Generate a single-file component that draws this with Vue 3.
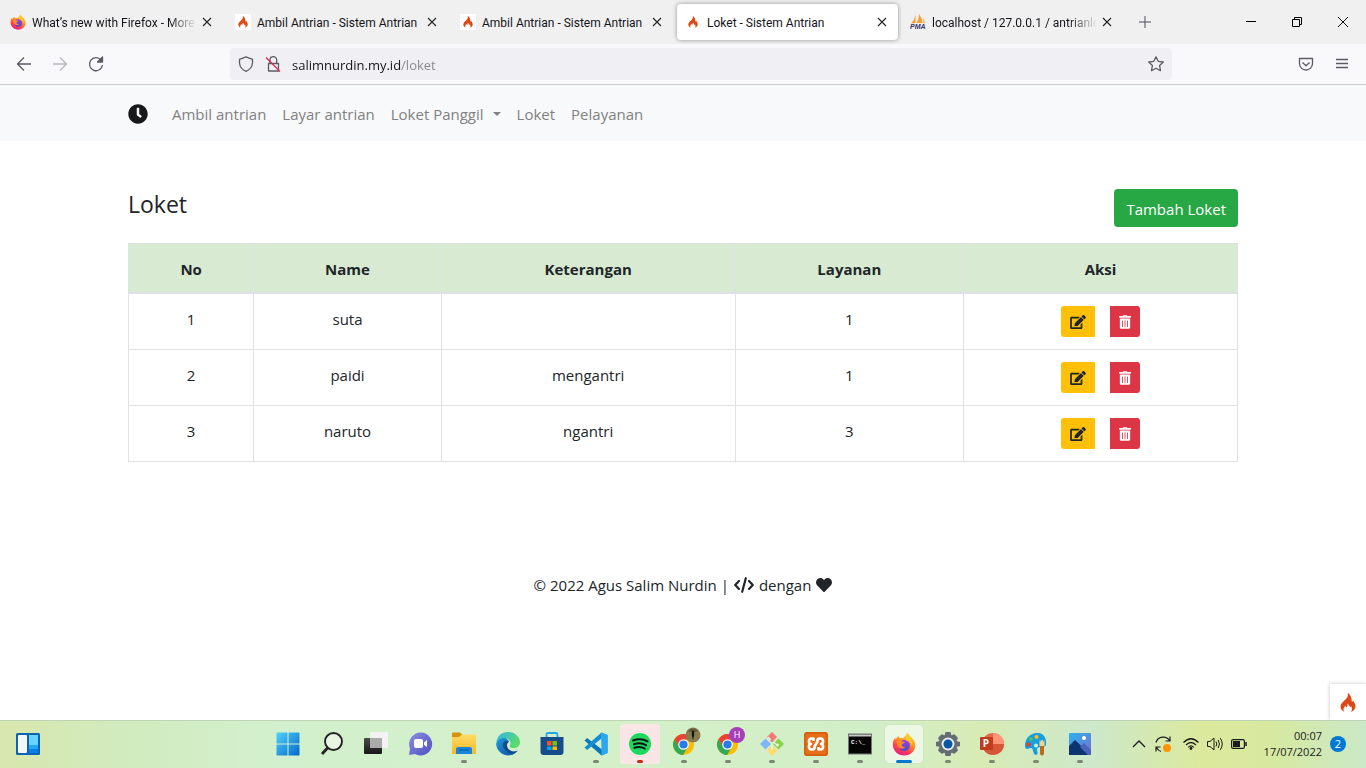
<script setup>
import { ref } from 'vue'

const tabs = [
  { title: 'What’s new with Firefox - More', icon: 'firefox', fade: true },
  { title: 'Ambil Antrian - Sistem Antrian', icon: 'flame', tile: true },
  { title: 'Ambil Antrian - Sistem Antrian', icon: 'flame', tile: true },
  { title: 'Loket - Sistem Antrian', icon: 'flame', active: true },
  { title: 'localhost / 127.0.0.1 / antrianlok', icon: 'pma', fade: true }
]
const address = ref('salimnurdin.my.id/loket')
const rows = [
  { no: 1, name: 'suta', note: '', service: 1 },
  { no: 2, name: 'paidi', note: 'mengantri', service: 1 },
  { no: 3, name: 'naruto', note: 'ngantri', service: 3 }
]
const apps = [
  { id: 'start' }, { id: 'search' }, { id: 'taskview' }, { id: 'chat' },
  { id: 'explorer', open: true }, { id: 'edge' }, { id: 'store' },
  { id: 'vscode', open: true }, { id: 'spotify', alert: true },
  { id: 'chrome', open: true }, { id: 'chrome-h', open: true },
  { id: 'git', open: true }, { id: 'xampp', open: true },
  { id: 'terminal', open: true }, { id: 'firefox', active: true },
  { id: 'settings', open: true }, { id: 'powerpoint', open: true },
  { id: 'paint', open: true }, { id: 'photos', open: true }
]
</script>

<template>
  <div class="desktop">
    <svg class="defs" aria-hidden="true">
      <defs>
        <linearGradient id="ffBody" x1="0.8" y1="0" x2="0.3" y2="1">
          <stop offset="0" stop-color="#ffe03a" /><stop offset="0.4" stop-color="#ff9a22" />
          <stop offset="0.7" stop-color="#ff4645" /><stop offset="1" stop-color="#e8188b" />
        </linearGradient>
        <linearGradient id="ffCore" x1="0" y1="0" x2="0" y2="1">
          <stop offset="0" stop-color="#9a3ff0" /><stop offset="1" stop-color="#4a49c8" />
        </linearGradient>
        <linearGradient id="winBlue" x1="0" y1="0" x2="1" y2="1">
          <stop offset="0" stop-color="#4fd0fb" /><stop offset="1" stop-color="#0669c9" />
        </linearGradient>
        <linearGradient id="edgeTop" x1="0" y1="0" x2="1" y2="0.5">
          <stop offset="0" stop-color="#2cb3e8" /><stop offset="1" stop-color="#5fdb6b" />
        </linearGradient>
        <linearGradient id="edgeLow" x1="0" y1="0" x2="1" y2="1">
          <stop offset="0" stop-color="#1c9de0" /><stop offset="1" stop-color="#0d4a9b" />
        </linearGradient>
        <linearGradient id="folder" x1="0" y1="0" x2="0" y2="1">
          <stop offset="0" stop-color="#ffdb65" /><stop offset="1" stop-color="#f8b826" />
        </linearGradient>
        <linearGradient id="chatFill" x1="0" y1="0" x2="1" y2="1">
          <stop offset="0" stop-color="#8a8fe4" /><stop offset="1" stop-color="#4f4ebd" />
        </linearGradient>
        <linearGradient id="photoSky" x1="0" y1="0" x2="1" y2="1">
          <stop offset="0" stop-color="#2ab3ef" /><stop offset="1" stop-color="#7a6fd0" />
        </linearGradient>
        <linearGradient id="viewDark" x1="0" y1="0" x2="0" y2="1">
          <stop offset="0" stop-color="#4b4b4b" /><stop offset="1" stop-color="#161616" />
        </linearGradient>
      </defs>
      <symbol id="flame" viewBox="0 0 16 19">
        <path fill="#dd4814" d="M7.600 0C8.300 2 7.800 3.900 6 6C4.200 8 .6 10.300.5 13.600C.4 16 2.100 18 4.600 19C3.300 17.700 3.100 15.900 4.100 14.500C4.500 13.900 5 13.500 5.100 12.700C6 13.200 6.300 13.900 6.100 14.800C7.300 13.900 7.700 12.400 7.300 10.800C9.400 11.600 9.300 13.300 10.100 14.300C10.700 14.100 10.900 13.600 10.900 13C12.300 14.900 12.300 17.400 10.800 19C13.700 18.100 15.600 15.900 15.500 13.100C15.400 10.300 13.700 9.300 13.200 7.200C12.700 7.700 12.500 8.200 12.600 9C11.300 8.200 11.800 6.600 11.300 4.700C10.800 2.600 9.600 1 7.600 0Z" />
      </symbol>
      <symbol id="firefox" viewBox="0 0 24 24">
        <path fill="url(#ffBody)" d="M15 .5C17.500 2.500 18 4 19 5.300C22 7.500 23.500 10.500 23.300 14C22.800 19.500 18.200 23.500 12.300 23.500C6 23.500 1 19 .8 12.800C.7 9.500 2 7 3.200 5.500C3.200 6.500 3.300 7 3.800 7.500C4.500 6 5.500 4.700 7 4C6.900 5 7.200 5.700 7.700 6.200C8.600 5.800 10 5.900 11 6.300C13 4.600 14.600 3 15 .5Z" />
        <circle cx="12.300" cy="13.500" r="5.600" fill="url(#ffCore)" />
        <path fill="#ff8a25" d="M4 9.500C6.500 8 8 8.500 9.500 9.300C10.500 10 12 9.700 13 10.300C12.500 11.700 10 11.500 9.700 12.700C9.600 14.500 11.500 15.500 13.800 14.600C12.500 17 8.500 17.500 6.500 15C5 13.300 5 11 4 9.500Z" />
        <path fill="#ffc928" d="M15.300 2C17 6 20.500 8 20 13.500C19.500 12 18.500 10.500 16.500 9.500C14 8.500 13 7 13.700 5Z" />
      </symbol>
      <symbol id="chrome" viewBox="0 0 24 24">
        <circle cx="12" cy="12" r="11" fill="#fbbc05" />
        <path fill="#ea4335" d="M2.500 6.500A11 11 0 0 1 21.500 6.500L12 7L7.500 14.500Z" />
        <path fill="#34a853" d="M2.500 6.500A11 11 0 0 0 11.500 23L16.500 14.500L7.700 14.500Z" />
        <circle cx="12" cy="12" r="5.500" fill="#fff" /><circle cx="12" cy="12" r="4.300" fill="#287bea" />
      </symbol>
      <symbol id="close" viewBox="0 0 10 10">
        <path d="M1 1L9 9M9 1L1 9" fill="none" stroke="#222" stroke-width="1.100" />
      </symbol>
    </svg>

    <header class="browser">
      <div class="tabstrip">
        <div v-for="(tab, i) in tabs" :key="i" class="tab" :class="{ active: tab.active }">
          <svg v-if="tab.icon === 'firefox'" class="favicon"><use href="#firefox" /></svg>
          <svg v-else-if="tab.icon === 'pma'" class="favicon" viewBox="0 0 16 16">
            <path d="M5.500 1V9L1 9.500Q4.500 6 5.500 1M9 0Q12.500 5 12.500 9L6.500 9Q9 5 9 0Z" fill="#f7a030" />
            <path d="M12.500 3.500Q15 6.500 15 9.500L13 9Z" fill="#f8be70" />
            <text x="0" y="15" font-family="Liberation Sans, sans-serif" font-size="7" font-weight="700" font-style="italic" fill="#34366b">PMA</text>
          </svg>
          <span v-else class="favicon flame-icon" :class="{ tile: tab.tile }"><svg><use href="#flame" /></svg></span>
          <span class="tab-title" :class="{ fade: tab.fade }">{{ tab.title }}</span>
          <button class="tab-close" aria-label="Close tab"><svg><use href="#close" /></svg></button>
        </div>
        <button class="new-tab" aria-label="New tab">
          <svg viewBox="0 0 12 12"><path d="M6 0V12M0 6H12" stroke="#4c4b57" fill="none" /></svg>
        </button>
        <div class="window-controls">
          <button aria-label="Minimize"><svg viewBox="0 0 10 10"><path d="M0 4.500H10" stroke="#000" /></svg></button>
          <button aria-label="Restore"><svg viewBox="0 0 10 10" fill="none" stroke="#000"><path d="M.5 2.500H7.500V9.500H.5ZM2.500 2.500V.5H9.500V7.500H7.500" /></svg></button>
          <button aria-label="Close window"><svg viewBox="0 0 10 10"><path d="M0 0L10 10M10 0L0 10" stroke="#111" /></svg></button>
        </div>
      </div>
      <div class="toolbar">
        <div class="tools">
          <button aria-label="Back"><svg viewBox="0 0 16 16"><path d="M15 8H1.500M8 1.500L1.500 8L8 14.500" /></svg></button>
          <button aria-label="Forward" class="dim"><svg viewBox="0 0 16 16"><path d="M1 8H14.500M8 1.500L14.500 8L8 14.500" /></svg></button>
          <button aria-label="Reload"><svg viewBox="0 0 16 16"><path d="M13 4A6.500 6.500 0 1 0 14.500 9" /><path d="M14.500 1V6H9.500Z" class="solid" /></svg></button>
        </div>
        <div class="urlbar">
          <svg class="url-icon" viewBox="0 0 16 16"><path d="M8 .8L14.500 3.300V7Q14 12.800 8 15.300Q2 12.800 1.500 7V3.300Z" /></svg>
          <svg class="url-icon" viewBox="0 0 16 16">
            <path d="M3.500 7.500H13.500V15H3.500ZM5 7V4A3.300 3.300 0 0 1 11.700 4V7" />
            <path d="M1 1.500L15 15.500" class="slash" />
          </svg>
          <input v-model="address" class="address" aria-label="Address" type="text" />
          <button class="star" aria-label="Bookmark">
            <svg viewBox="0 0 16 16"><path d="M8 .9L10.200 5.300L15.300 6L11.600 9.500L12.500 14.700L8 12.300L3.500 14.700L4.400 9.500L.7 6L5.800 5.300Z" /></svg>
          </button>
        </div>
        <div class="tools tools-right">
          <button aria-label="Pocket"><svg viewBox="0 0 16 16"><path d="M1.500 2.500H14.500V7.500A6.500 6.500 0 0 1 1.500 7.500ZM4.500 6.500L8 9.800L11.500 6.500" /></svg></button>
          <button aria-label="Menu"><svg viewBox="0 0 16 16"><path d="M2 3.500H14M2 7.500H14M2 11.500H14" /></svg></button>
        </div>
      </div>
    </header>

    <main class="page">
      <nav class="navbar">
        <div class="container nav-row">
          <a href="#" class="brand" aria-label="Home">
            <svg viewBox="0 0 512 512"><path d="M256,8C119,8,8,119,8,256S119,504,256,504,504,393,504,256,393,8,256,8Zm92.490,313h0l-20,25a16,16,0,0,1-22.490,2.500h0l-67-49.720a40,40,0,0,1-15-31.230V112a16,16,0,0,1,16-16h32a16,16,0,0,1,16,16V256l58,42.500A16,16,0,0,1,348.490,321Z" /></svg>
          </a>
          <a href="#" class="nav-link">Ambil antrian</a>
          <a href="#" class="nav-link">Layar antrian</a>
          <a href="#" class="nav-link caret">Loket Panggil</a>
          <a href="#" class="nav-link">Loket</a>
          <a href="#" class="nav-link">Pelayanan</a>
        </div>
      </nav>

      <section class="container content">
        <div class="title-row">
          <h1>Loket</h1>
          <button class="add">Tambah Loket</button>
        </div>
        <table>
          <colgroup><col class="c-no" /><col class="c-name" /><col class="c-note" /><col class="c-service" /><col /></colgroup>
          <thead>
            <tr><th>No</th><th>Name</th><th>Keterangan</th><th>Layanan</th><th>Aksi</th></tr>
          </thead>
          <tbody>
            <tr v-for="row in rows" :key="row.no">
              <td>{{ row.no }}</td>
              <td>{{ row.name }}</td>
              <td>{{ row.note }}</td>
              <td>{{ row.service }}</td>
              <td class="action-cell">
                <div class="actions">
                  <button class="edit" aria-label="Edit">
                    <svg viewBox="0 0 576 512"><path d="M402.600 83.200l90.200 90.200c3.800 3.800 3.800 10 0 13.800L274.400 405.600l-92.800 10.300c-12.400 1.400-22.900-9.100-21.500-21.500l10.300-92.800L388.800 83.200c3.800-3.800 10-3.800 13.800 0zm162-22.900l-48.800-48.800c-15.200-15.200-39.900-15.200-55.200 0l-35.400 35.400c-3.800 3.800-3.800 10 0 13.800l90.200 90.200c3.800 3.800 10 3.800 13.800 0l35.400-35.400c15.200-15.300 15.200-40 0-55.200zM384 346.200V448H64V128h229.800c3.200 0 6.200-1.300 8.500-3.500l40-40c7.600-7.600 2.200-20.500-8.500-20.500H48C21.500 64 0 85.500 0 112v352c0 26.500 21.500 48 48 48h352c26.500 0 48-21.500 48-48V306.200c0-10.700-12.900-16-20.500-8.500l-40 40c-2.200 2.300-3.500 5.300-3.500 8.500z" /></svg>
                  </button>
                  <button class="delete" aria-label="Hapus">
                    <svg viewBox="0 0 448 512"><path d="M32 464a48 48 0 0 0 48 48h288a48 48 0 0 0 48-48V128H32zm272-256a16 16 0 0 1 32 0v224a16 16 0 0 1-32 0zm-96 0a16 16 0 0 1 32 0v224a16 16 0 0 1-32 0zm-96 0a16 16 0 0 1 32 0v224a16 16 0 0 1-32 0zM432 32H312l-9.400-18.700A24 24 0 0 0 281.100 0H166.800a23.720 23.720 0 0 0-21.400 13.300L136 32H16A16 16 0 0 0 0 48v32a16 16 0 0 0 16 16h416a16 16 0 0 0 16-16V48a16 16 0 0 0-16-16z" /></svg>
                  </button>
                </div>
              </td>
            </tr>
          </tbody>
        </table>
      </section>

      <footer class="credits">
        <span>© 2022 Agus Salim Nurdin |</span>
        <svg class="code" viewBox="0 0 20 16" fill="none" stroke="#212529" stroke-width="2.200" stroke-linecap="round" stroke-linejoin="round"><path d="M5 4L1.200 8L5 12M15 4L18.800 8L15 12M11.800 1.200L8.200 14.800" /></svg>
        <span>dengan</span>
        <svg class="heart" viewBox="0 0 512 512"><path fill="#212529" d="M462.300 62.600C407.500 15.900 326 24.300 275.700 76.200L256 96.500l-19.700-20.300C186.100 24.300 104.500 15.900 49.700 62.600c-62.800 53.600-66.100 149.800-9.900 207.900l193.500 199.800c12.500 12.900 32.800 12.900 45.300 0l193.500-199.800c56.300-58.100 53-154.300-9.800-207.900z" /></svg>
      </footer>
      <button class="debug" aria-label="Debug toolbar"><svg><use href="#flame" /></svg></button>
    </main>

    <footer class="taskbar">
      <div class="task-left">
        <button aria-label="Widgets">
          <svg viewBox="0 0 24 22">
            <rect width="24" height="22" rx="1.500" fill="#0a63b5" /><rect x="2" y="2" width="9" height="18" rx="1" fill="#f5f6f7" />
            <rect x="13" y="2" width="9" height="10" fill="#66d5ff" /><rect x="13" y="12" width="9" height="4" fill="#23a7f2" /><rect x="13" y="16" width="9" height="4" fill="#0a80e4" />
          </svg>
        </button>
      </div>
      <div class="apps">
        <button v-for="app in apps" :key="app.id" class="app" :class="{ open: app.open, alert: app.alert, current: app.active }" :aria-label="app.id">
          <svg viewBox="0 0 24 24">
            <path v-if="app.id === 'start'" fill="url(#winBlue)" d="M1 .5H11.500V11.500H.5V1ZM12.500 .5H23L23.500 1V11.500H12.500ZM.5 12.500H11.500V23.500H1L.5 23ZM12.500 12.500H23.500V23L23 23.500H12.500Z" />
            <g v-else-if="app.id === 'search'" fill="none" stroke="#222"><circle cx="13.500" cy="9.500" r="8.500" fill="#e6f6e2" stroke-width="1.900" /><path d="M7.500 16L2 22" stroke-width="2.800" /></g>
            <g v-else-if="app.id === 'taskview'">
              <rect x="0" y="6" width="18" height="16" rx="1" fill="url(#viewDark)" /><rect x="6" y="0" width="18" height="16" rx="1" fill="#f3f3f3" /><rect x="6" y="6" width="12" height="10" fill="#a9aaa9" />
            </g>
            <g v-else-if="app.id === 'chat'">
              <path fill="url(#chatFill)" d="M12.500 .5A11.500 11.500 0 1 1 7 22L1 23L2 16.500A11.500 11.500 0 0 1 12.500 .5Z" />
              <rect x="6" y="7" width="9" height="9" rx="2" fill="#fff" /><path d="M16 10.500L19 8V15L16 12.800Z" fill="#fff" />
            </g>
            <g v-else-if="app.id === 'explorer'">
              <path d="M0 1.500Q0 .5 1 .5H8L10.500 3V8H0Z" fill="#d89108" /><path d="M0 5H7L10 2.500H24V22H0Z" fill="url(#folder)" />
              <path d="M4 22V17Q4 15 6 15H18Q20 15 20 17V22Z" fill="#1684d8" /><path d="M7 18H17" stroke="#075aaa" />
            </g>
            <g v-else-if="app.id === 'edge'">
              <path fill="url(#edgeLow)" d="M1 9C4 4 12 5 13 10C8 12 9 20 17 20C19 20 21 19 22 18C19 24 10 25 5 21C1 18-1 13 1 9Z" />
              <path fill="url(#edgeTop)" d="M.5 10C1 4 6 0 12 0C19 0 24 5 24 10C24 14 21 16 18 16C15 16 13 15 13.800 13.500C16 11 13 6 8.500 6C5 6 2 8 .5 10Z" />
              <path fill="#114a8b" d="M7 12C8 8 11 9 12.500 10C9 13 12 19 18 19.500L21 19C18 23 7 22 7 12Z" />
            </g>
            <g v-else-if="app.id === 'store'">
              <path d="M6.500 6V2.500Q6.500 1 8 1H16Q17.500 1 17.500 2.500V6" fill="none" stroke="#24a6ec" stroke-width="1.800" />
              <path d="M.5 5H23.500V20Q23.500 23 20.500 23H3.500Q.5 23 .5 20Z" fill="#174c8a" />
              <path d="M7 9H11.500V13.500H7Z" fill="#f35325" /><path d="M12.500 9H17V13.500H12.500Z" fill="#81bc06" /><path d="M7 14.500H11.500V18H7Z" fill="#05a6f0" /><path d="M12.500 14.500H17V18H12.500Z" fill="#ffba08" />
            </g>
            <g v-else-if="app.id === 'vscode'">
              <path d="M17.500 .5L23.500 3V21L17.500 23.500L.5 8.500L3 6L18 17.500Z" fill="#0877bd" /><path d="M17.500 .5V6.500L3 18L.5 15.500Z" fill="#138ed3" /><path d="M17.500 .5L23.500 3V21L17.500 23.500Z" fill="#2ba8ef" />
            </g>
            <g v-else-if="app.id === 'spotify'">
              <circle cx="12" cy="12" r="11" fill="#1ed760" /><path d="M5 8.500Q13 5.700 19.500 9.300M6 12.300Q12.500 10 18 13.200M6.500 15.800Q12 13.800 16.800 16.500" fill="none" stroke="#111" stroke-width="2" stroke-linecap="round" />
            </g>
            <g v-else-if="app.id === 'chrome'">
              <use href="#chrome" x="0" y="1" width="23" height="23" /><circle cx="21" cy="3" r="7.500" fill="#867e50" /><path d="M16 -1Q21-6 26 -1L22.500 0Q21 -1 19.500 0Z" fill="#5d5438" /><path d="M20 -1H22Q23 3 21 8Q19 3 20 -1Z" fill="#15120e" />
            </g>
            <g v-else-if="app.id === 'chrome-h'">
              <use href="#chrome" x="0" y="1" width="23" height="23" /><circle cx="21" cy="3" r="8" fill="#a63fb8" /><text x="21" y="6" text-anchor="middle" font-family="Open Sans, sans-serif" font-size="9" fill="#fff">H</text>
            </g>
            <g v-else-if="app.id === 'git'">
              <path d="M12 0L17 5L12 10L7 5Z" fill="#f27878" /><path d="M5.500 6.500L11 12L5.500 17.500L0 12Z" fill="#82b5f5" /><path d="M18.500 6.500L24 12L18.500 17.500L13 12Z" fill="#83d34b" /><path d="M12 13L17.500 18.500L12 24L6.500 18.500Z" fill="#ffdc72" />
              <path d="M8 5L12 9V18M12 9L17 13" fill="none" stroke="#e4f4db" stroke-width="1.500" /><circle cx="12" cy="8.500" r="1.500" fill="#f27878" /><circle cx="17.500" cy="13" r="1.500" fill="#e9fadd" />
            </g>
            <g v-else-if="app.id === 'xampp'">
              <rect width="24" height="24" rx="2.500" fill="#e96c17" /><rect x="1" y="1" width="22" height="22" rx="2" fill="none" stroke="#c45710" />
              <path d="M9.500 9V6.500H7.500A2.800 2.800 0 0 0 7 12A2.800 2.800 0 0 0 7.500 17.500H9Q10.500 17.500 10.500 15.500V14.500L13.500 9.500V8.500Q13.500 6.500 15 6.500H16.500A2.800 2.800 0 0 1 17 12A2.800 2.800 0 0 1 16.500 17.500H14.500V15" fill="none" stroke="#fff" stroke-width="2.600" stroke-linejoin="round" />
            </g>
            <g v-else-if="app.id === 'terminal'">
              <rect x=".5" y="2" width="23" height="20" fill="#050505" stroke="#777" /><path d="M1 3.500H23" stroke="#c9c9c9" stroke-width="2" /><text x="3" y="12" font-family="Liberation Mono, monospace" font-size="6" font-weight="700" fill="#fff">C:\_</text>
            </g>
            <use v-else-if="app.id === 'firefox'" href="#firefox" />
            <g v-else-if="app.id === 'settings'">
              <path d="M9.500 0H14.500L15.300 3.300L18.500 2.200L22 6L20.500 9L24 10V14L20.500 15L22 18.500L18.500 21.800L15.300 20.700L14.500 24H9.500L8.700 20.700L5.500 21.800L2 18.500L3.500 15L0 14V10L3.500 9L2 6L5.500 2.200L8.700 3.300Z" fill="#666c73" />
              <circle cx="12" cy="12" r="6.500" fill="#e5eaef" /><circle cx="12" cy="12" r="4.500" fill="#08599f" />
            </g>
            <g v-else-if="app.id === 'powerpoint'">
              <circle cx="13" cy="12" r="11" fill="#e6684b" /><path d="M13 1A11 11 0 0 1 24 12H13Z" fill="#ff9477" /><path d="M4 18A11 11 0 0 0 24 12H13Z" fill="#d65638" /><rect x="0" y="5" width="13" height="13" rx="1" fill="#c23a1d" />
              <text x="6" y="15" text-anchor="middle" font-family="Open Sans, sans-serif" font-size="10" font-weight="700" fill="#fff">P</text>
            </g>
            <g v-else-if="app.id === 'paint'">
              <path d="M12 1C20 0 23 7 22 13C20 17 15 13 13 17C13 20 15 22 12 23C8 22 10 16 7 16C4 17 1 18 1 14C1 7 5 2 12 1Z" fill="#159ee0" />
              <circle cx="7" cy="7" r="2" fill="#4ac15c" /><circle cx="12.500" cy="5" r="2" fill="#ffbd19" /><circle cx="4.500" cy="12.500" r="2.200" fill="#da4330" /><circle cx="12" cy="13.500" r="2" fill="#d5efcc" />
              <path d="M15.500 14V9Q16 7 16.500 10Q17 6 17.800 9Q18.500 6 19.500 10Q20.500 7 20.500 9V14Z" fill="#f1d293" /><path d="M16 14H20V22Q18 25 16 22Z" fill="#b76b23" />
            </g>
            <g v-else>
              <rect x="1" y="1" width="22" height="22" rx="1" fill="url(#photoSky)" /><circle cx="16" cy="6" r="2" fill="#fff" /><path d="M1 14L7 8L23 23H1Z" fill="#0a356f" /><path d="M12 15L16 11L23 18V23H20Z" fill="#4a63bb" />
            </g>
          </svg>
        </button>
      </div>
      <div class="tray">
        <svg class="chevron" viewBox="0 0 12 8"><path d="M0 7L6 1L12 7" fill="none" stroke="#1b1b1b" stroke-width="1.300" /></svg>
        <svg class="sync" viewBox="0 0 16 16"><path d="M1 6.500A7.500 7.500 0 0 1 14.500 4.500M15 .5V5H10.500M6 15.500A7.500 7.500 0 0 1 1.500 11.500M1 15.500V11H5.500" fill="none" stroke="#1b1b1b" stroke-width="1.200" /><circle cx="12" cy="12" r="4" fill="#ff9408" /></svg>
        <svg class="wifi" viewBox="0 0 16 12"><path d="M.5 4.500Q8-3 15.500 4.500M3 7Q8 2 13 7M5.300 9.300Q8 6.500 10.700 9.300" fill="none" stroke="#1b1b1b" stroke-width="1.200" /><circle cx="8" cy="10.500" r="1.400" fill="#1b1b1b" /></svg>
        <svg class="sound" viewBox="0 0 16 14"><path d="M.5 4.500H3L7 1V13L3 9.500H.5ZM9 4.500Q10.500 7 9 9.500M11.200 3Q13.700 7 11.200 11M13.300 1.200Q17.200 7 13.300 12.800" fill="none" stroke="#1b1b1b" /></svg>
        <svg class="battery" viewBox="0 0 16 10"><rect x=".6" y=".6" width="12.800" height="8.800" rx="1.500" fill="none" stroke="#1b1b1b" stroke-width="1.200" /><rect x="2" y="2" width="7" height="6" fill="#1b1b1b" /><path d="M15 3V7" stroke="#1b1b1b" stroke-width="1.500" /></svg>
        <div class="clock"><span>00:07</span><span>17/07/2022</span></div>
        <span class="count">2</span>
      </div>
    </footer>
  </div>
</template>

<style>
body { margin: 0; }
</style>

<style scoped>
* { box-sizing: border-box; }
.desktop { min-height: 100vh; display: flex; flex-direction: column; background: #fff; color: #212529; font-family: "Open Sans", "Noto Sans", sans-serif; font-size: 15px; line-height: 24px; }
.defs { position: absolute; width: 0; height: 0; }
button { border: 0; padding: 0; background: none; font: inherit; color: inherit; display: flex; align-items: center; justify-content: center; }
svg { display: block; flex: none; overflow: visible; }
a { text-decoration: none; }

.tabstrip { display: flex; align-items: center; gap: 4px; height: 44px; padding-left: 2px; background: #f0f0f0; }
.tab { display: flex; align-items: center; width: 221px; height: 36px; padding: 0 6px 0 8px; border-radius: 4px; font-family: Roboto, "Open Sans", sans-serif; font-size: 12px; color: #15141a; }
.tab.active { background: #fff; box-shadow: 0 0 4px rgba(0, 0, 0, 0.4); }
.favicon { width: 16px; height: 16px; flex: none; }
.flame-icon { display: flex; align-items: center; justify-content: center; }
.flame-icon svg { width: 10px; height: 12px; }
.tile { background: #fff; }
.tab-title { flex: 1; min-width: 0; margin-left: 6px; padding-top: 1px; white-space: nowrap; }
.fade { mask-image: linear-gradient(90deg, #000 calc(100% - 28px), transparent); }
.tab-close { width: 20px; height: 20px; }
.tab-close svg { width: 10px; height: 10px; }
.new-tab { width: 36px; height: 36px; }
.new-tab svg { width: 12px; height: 12px; }
.window-controls { display: flex; margin-left: auto; }
.window-controls button { width: 46px; height: 44px; }
.window-controls svg { width: 10px; height: 10px; }
.toolbar { display: grid; grid-template-columns: 224px 1fr 188px; align-items: center; height: 41px; padding: 0 6px; background: #f9f9fb; border-bottom: 1px solid #ccccce; }
.tools { display: flex; }
.tools-right { justify-content: flex-end; }
.tools button { width: 36px; height: 32px; }
.toolbar svg { width: 16px; height: 16px; fill: none; stroke: #5b5b66; stroke-width: 1.3; stroke-linejoin: round; }
.toolbar .solid { fill: #5b5b66; }
.toolbar .slash { stroke: #e22850; }
.dim { opacity: 0.4; }
.urlbar { display: flex; align-items: center; gap: 11px; height: 32px; padding: 0 8px; border-radius: 4px; background: #f0f0f4; }
.address { flex: 1; min-width: 0; padding: 2px 0 0; border: 0; outline: 0; font-family: inherit; font-size: 13px; line-height: 20px; color: transparent; background: linear-gradient(90deg, #15141a 108px, #85858c 108px); background-clip: text; }

.page { position: relative; flex: 1; display: flex; flex-direction: column; }
.container { width: 100%; max-width: 1140px; margin: 0 auto; padding: 0 15px; }
.navbar { background: #f8f9fa; padding: 9px 0 7px; }
.nav-row { display: flex; align-items: center; height: 40px; }
.brand { margin-right: 16px; }
.brand svg { width: 20px; height: 20px; fill: #18191a; }
.nav-link { padding: 8px; color: #808182; }
.caret { display: flex; align-items: center; gap: 9px; }
.caret::after { content: ""; border: 4px solid transparent; border-top-color: #808182; border-bottom: 0; }
.content { padding-top: 48px; }
.title-row { display: flex; justify-content: space-between; align-items: flex-start; margin-bottom: 16px; }
h1 { margin: 0; font-size: 23px; line-height: 30px; font-weight: 400; }
.add { height: 38px; padding: 2px 12px 0; border-radius: 4px; background: #28a745; color: #fff; }
table { width: 100%; table-layout: fixed; border-collapse: collapse; text-align: center; }
.c-no { width: 11.3%; }
.c-name { width: 16.9%; }
.c-note { width: 26.5%; }
.c-service { width: 20.6%; }
th, td { padding: 13px 12px 11px; border: 1px solid #dee2e6; vertical-align: top; }
th { background: #d9ead3; border-bottom-width: 2px; font-weight: 700; }
.action-cell { padding: 12px; }
.actions { display: flex; justify-content: center; gap: 15px; }
.actions svg { fill: currentColor; height: 14px; }
.edit { width: 34px; height: 31px; background: #ffc107; border-radius: 3px 0 0 3px; }
.edit svg { width: 16px; }
.delete { width: 30px; height: 31px; background: #dc3545; color: #fff; border-radius: 0 3px 3px 0; }
.delete svg { width: 12px; }
.credits { display: flex; justify-content: center; align-items: center; gap: 5px; margin-top: 111px; }
.code { width: 20px; height: 16px; }
.heart { width: 16px; height: 16px; }
.debug { position: absolute; right: 0; bottom: 0; width: 36px; height: 36px; background: #fff; box-shadow: 0 0 4px rgba(0, 0, 0, 0.25); }
.debug svg { width: 16px; height: 19px; }

.taskbar { position: relative; display: grid; grid-template-columns: 1fr auto 1fr; align-items: center; height: 48px; padding-left: 2px; box-shadow: inset 0 1px #bfd4b6; background: linear-gradient(90deg, #d8e7ad 0, #d1ebbe 9%, #d3f0ce 20%, #d4f0c8 50%, #d2eec8 64%, #d8ebb5 72%, #cde8cb 80%, #dce99d 88%, #d7e99f 93%, #cae8c7 100%); }
.task-left { padding-left: 14px; }
.task-left svg { width: 24px; height: 22px; }
.apps { display: flex; }
.app { position: relative; width: 44px; height: 48px; }
.app > svg { position: relative; width: 24px; height: 24px; }
.app::before { content: ""; position: absolute; inset: 4px 2px; border-radius: 4px; }
.app.alert::before { background: #fbe6e5; }
.app.current::before { inset: 5px 3px; background: #ecf7e4; box-shadow: 0 0 1px #aabfa4; }
.app::after { content: ""; position: absolute; left: 19px; bottom: 5px; width: 6px; height: 3px; border-radius: 2px; }
.app.open::after { background: #7a8874; }
.app.alert::after { background: #c42b1c; }
.app.current::after { left: 14px; width: 16px; background: #0078d4; }
.tray { display: flex; align-items: center; justify-content: flex-end; padding-right: 20px; color: #1b1b1b; }
.chevron { width: 12px; height: 8px; margin-right: 10px; }
.sync { width: 16px; height: 16px; margin-right: 12px; }
.wifi { width: 16px; height: 12px; margin-right: 8px; }
.sound { width: 16px; height: 14px; margin-right: 8px; }
.battery { width: 16px; height: 10px; }
.clock { display: flex; flex-direction: column; align-items: flex-end; width: 75px; margin-right: 8px; font-size: 11px; line-height: 16px; }
.count { width: 16px; height: 16px; border-radius: 8px; background: #0078d4; color: #fff; font-size: 11px; line-height: 16px; text-align: center; }
</style>
